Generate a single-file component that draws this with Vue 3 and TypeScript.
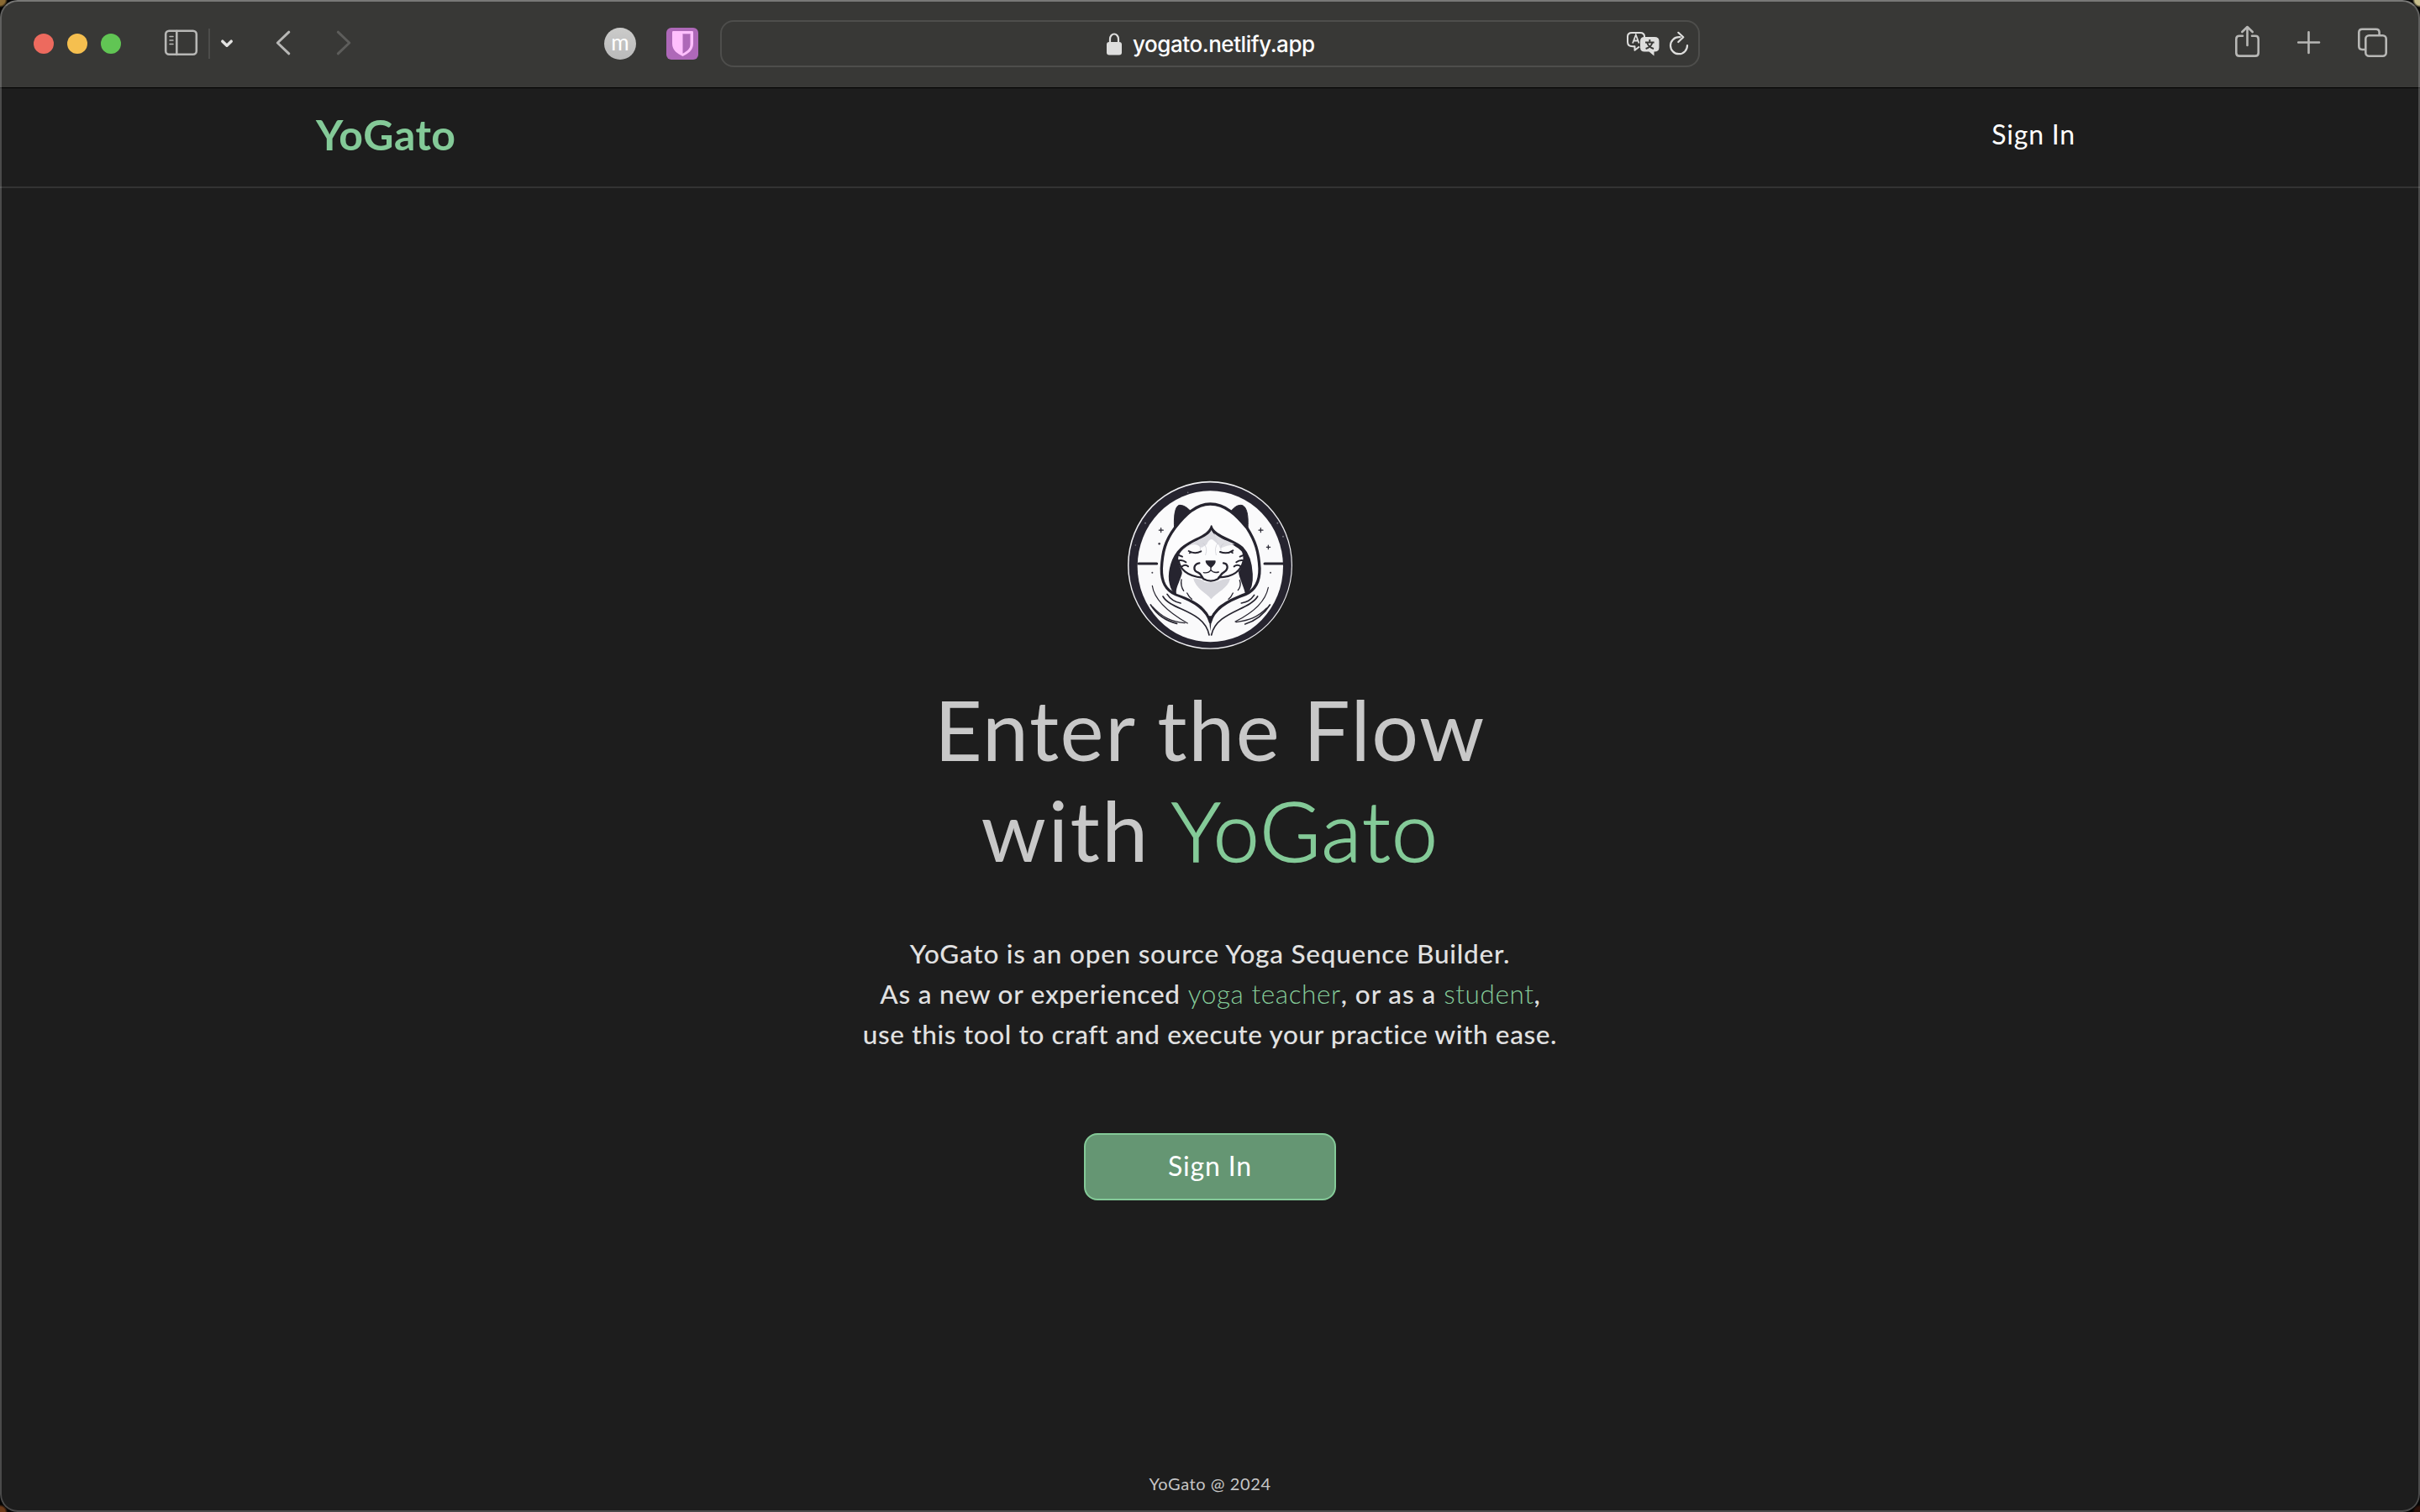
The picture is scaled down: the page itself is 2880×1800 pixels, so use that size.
<script setup lang="ts">
const lights = ['#ed6a5e', '#f5bf4f', '#61c554']
</script>

<template>
  <div class="desktop">
    <div class="window">
      <div class="toolbar">
        <div class="lights">
          <i v-for="c in lights" :key="c" :style="{ background: c }" />
        </div>
        <svg class="ic sidebar" viewBox="194 0 44 104" width="44" height="104">
          <rect x="197.200" y="36.800" width="36.600" height="28" rx="4" />
          <path d="M210.300 37v28" />
          <path class="thin" d="M202 43.400h4M202 48h4M202 52.400h4" />
        </svg>
        <span class="sep" />
        <svg class="ic chev" viewBox="260 0 20 104" width="20" height="104"><path d="M264.800 49.200l5.200 5 5.200-5" /></svg>
        <svg class="ic back" viewBox="325 0 24 104" width="24" height="104"><path d="M343.800 38.200L330.300 51l13.500 12.800" /></svg>
        <svg class="ic fwd" viewBox="397 0 24 104" width="24" height="104"><path d="M402.300 38.200L415.800 51l-13.500 12.800" /></svg>
        <span class="avatar">m</span>
        <svg class="shield" viewBox="0 0 38 38" width="38" height="38">
          <rect width="38" height="38" rx="6" fill="#ae68b8" />
          <path d="M7 5.200Q7 4 8.200 4H30.800Q32 4 32 5.200V19C32 27 25.500 31 19.500 34C13.500 31 7 27 7 19Z" fill="#ffbffd" />
          <path d="M19.500 7.500H28.500V20C28.500 25 24.500 28 19.500 30.700Z" fill="#ae68b8" />
          <path d="M19.500 7.500H28.500" stroke="#c883d0" stroke-width="1" fill="none" />
        </svg>
        <div class="url">
          <svg class="lock" viewBox="0 0 20 28" width="20" height="28">
            <path d="M5 13V7.500a5 6 0 0 1 10 0V13" fill="none" stroke="#dededd" stroke-width="2.200" />
            <rect x="1" y="11" width="18" height="15.500" rx="3" fill="#dededd" />
          </svg>
          <span>yogato.netlify.app</span>
          <div class="tools">
            <svg viewBox="1934 36 42 34" width="42" height="34">
              <path d="M1951 56.500l-5.500 4.300v-4.600h-2.500q-6 0-6-5.200v-6.500q0-4.500 5-4.500h10q5 0 5 4.500v1" fill="none" stroke="#dededd" stroke-width="2" stroke-linejoin="round" />
              <path d="M1943 52.500l3.800-10 3.800 10M1944.300 49.500h5" fill="none" stroke="#dededd" stroke-width="1.800" />
              <path d="M1957 45h12q5.500 0 5.500 5v7.500q0 5-5.500 5h-.5v5l-6-5h-5.500q-5 0-5-5V50q0-5 5-5z" fill="#dededd" />
              <path d="M1963.300 48v3.200M1958 51.500h10.600M1960.200 52c1.200 3.500 3.800 5.800 7.800 7M1966.400 52c-1.200 3.500-3.800 5.800-7.800 7" fill="none" stroke="#383836" stroke-width="1.900" />
            </svg>
            <svg viewBox="1984 36 28 34" width="28" height="34">
              <path d="M1999.500 45.200h-1.500a10 10 0 1 0 10 9.800" fill="none" stroke="#dededd" stroke-width="2.200" stroke-linecap="round" />
              <path d="M1997.300 39.800l6 5.500-6 5.700" fill="none" stroke="#dededd" stroke-width="2.200" stroke-linecap="round" stroke-linejoin="round" />
            </svg>
          </div>
        </div>
        <div class="right">
          <svg class="ic" viewBox="2656 0 38 104" width="38" height="104">
            <path d="M2669 42.700h-4q-3.700 0-3.700 3.700v16.500q0 3.700 3.700 3.700h19q3.700 0 3.700-3.700V46.400q0-3.700-3.700-3.700h-4" />
            <path d="M2674.500 54V32.500M2668.300 38l6.200-6 6.200 6" />
          </svg>
          <svg class="ic" viewBox="2730 0 36 104" width="36" height="104"><path d="M2747.500 38.200v24.800M2735.200 50.500h24.800" /></svg>
          <svg class="ic" viewBox="2802 0 44 104" width="44" height="104">
            <rect x="2815.300" y="42.300" width="24.400" height="24.400" rx="4" />
            <path d="M2814.500 59h-3.300q-3.900 0-3.900-3.900V38.600q0-3.900 3.900-3.900h16.500q3.900 0 3.900 3.900V41" />
          </svg>
        </div>
      </div>

      <header class="nav">
        <span class="brand">YoGato</span>
        <a class="signin">Sign In</a>
      </header>

      <main class="hero">
        <svg class="logo" viewBox="0 0 660 675" width="220" height="225">
          <ellipse cx="330" cy="338.500" rx="294" ry="300" fill="#f0f0f3" />
          <ellipse cx="330.500" cy="339" rx="290" ry="295.500" fill="#26242f" />
          <ellipse cx="331" cy="343" rx="260" ry="270" fill="#fafafb" />
          <g fill="none" stroke="#26242f" stroke-linecap="round" stroke-linejoin="round">
            <path d="M75 333H140M525 333H592" stroke-width="9" />
            <path d="M203 208C200 165 205 125 222 124C242 124 258 142 272 158C250 170 222 190 203 208Z" fill="#26242f" stroke-width="3" />
            <path d="M465 208C468 165 463 125 440 124C420 124 408 142 394 160C420 172 445 190 465 208Z" fill="#26242f" stroke-width="3" />
            <path d="M331 120C280 120 240 160 205 205C170 252 160 290 157 350C156 400 172 428 208 443C262 462 318 490 331 542C344 490 400 462 456 443C490 428 508 400 507 350C504 290 492 252 462 205C425 160 385 120 331 120Z" fill="#fcfcfd" stroke-width="10" />
            <path d="M335 198C325 240 250 245 215 290C188 325 180 375 188 405C192 425 200 435 210 442L331 500L460 438C477 425 482 405 480 370C478 330 470 300 446 275C415 245 343 235 335 198Z" fill="#26242f" stroke-width="5" />
          </g>
          <path d="M335 214C325 245 265 250 228 288C216 302 215 315 218 330C222 350 236 360 228 375C220 400 206 425 210 440C265 458 320 486 331 530C342 486 400 458 455 437C450 412 434 385 432 362C450 340 452 310 444 290C415 258 345 245 335 214Z" fill="#fcfcfd" />
          <path d="M335 214C325 240 262 252 229 288L250 272Q275 255 300 276L318 265Q331 235 345 252L368 272Q395 255 418 264C390 248 345 242 335 214Z" fill="#d9d9df" />
          <path d="M345 225Q370 246 418 264Q390 268 366 278Z" fill="#dedee3" />
          <path d="M270 385Q298 388 312 398Q333 402 358 396Q380 386 402 387C395 420 355 435 334 460C315 435 280 425 270 385Z" fill="#d6d6dc" />
          <path d="M293 368Q299 372 307 388Q333 402 358 388Q367 372 372 366L361 363L333 356L307 365Z" fill="#fcfcfd" />
          <g fill="none" stroke="#26242f" stroke-linecap="round" stroke-linejoin="round">
            <path d="M254 288Q276 301 298 289M366 291Q391 301 412 286" stroke-width="6" />
            <path d="M262 293l-5 2M406 292l5 3" stroke-width="5" />
            <path d="M295 285Q298 265 285 262M369 285Q366 266 378 262M306 260Q324 275 314 302M358 260Q344 275 352 302" stroke-width="2" stroke="#c9c9d0" />
            <path d="M316 324H348Q350 332 334 346Q316 333 316 324Z" fill="#26242f" stroke-width="4" />
            <path d="M333 344V356Q325 368 307 365M333 356Q343 368 361 363" stroke-width="4" />
            <path d="M292 331C270 335 268 358 288 365C298 369 298 377 307 388Q333 402 358 388C367 378 370 368 382 362C398 350 393 332 378 331" stroke-width="7" />
            <path d="M218 323C222 350 246 378 302 383M450 323C440 360 415 380 362 382" stroke-width="7" />
            <path d="M219 303l12 5M218 322Q232 318 244 328M230 343Q242 334 252 343M449 303l-12 5M450 322Q436 318 424 328M440 343Q428 334 416 343" stroke-width="6" />
            <path d="M228 390Q224 412 236 430M436 392Q443 412 430 428M248 438Q255 452 265 460M412 438Q406 452 396 460" stroke-width="4" />
            <path d="M124 412C130 455 170 500 250 546M538 418C530 460 500 500 420 540" stroke-width="3.500" />
            <path d="M162 450C190 500 310 500 327 588M500 450C470 500 352 505 335 588" stroke-width="5" />
            <path d="M118 480C140 515 175 538 212 547M544 480C522 515 490 538 455 549" stroke-width="5" />
            <path d="M125 487C160 525 190 540 240 545M532 492C500 525 470 535 423 542" stroke-width="4" />
            <path d="M177 442C190 462 205 470 225 474M488 445C475 465 460 470 442 474" stroke-width="5" />
          </g>
          <path d="M326 520L331 574L337 520Z" fill="#26242f" />
          <g stroke="#26242f" stroke-width="3.500" stroke-linecap="round">
            <path d="M155 206v15M148 213.500h15M511 206v15M504 213.500h15M538 267v14M532 274h13" />
          </g>
          <g fill="#44424c"><circle cx="149" cy="262" r="4" /><circle cx="124" cy="365" r="3" /><circle cx="546" cy="365" r="3" /></g>
          <g fill="#777681"><circle cx="99" cy="188" r="3" /><circle cx="571" cy="188" r="3" /><circle cx="591" cy="236" r="3" /><circle cx="64" cy="267" r="2.500" /><circle cx="251" cy="79" r="2.500" /></g>
        </svg>
        <h1>
          <span class="t1">Enter the Flow</span><br>
          <span class="t2">with</span> <span class="t3">YoGato</span>
        </h1>
        <p class="lead">
          <span class="p1">YoGato is an open source Yoga Sequence Builder.</span><br>
          <span class="p2">As a new or experienced</span> <span class="g1">yoga teacher</span><span class="p3">, or as a </span><span class="g2">student</span>,<br>
          <span class="p4">use this tool to craft and execute your practice with ease.</span>
        </p>
        <button class="cta">Sign In</button>
      </main>

      <footer class="foot">YoGato @ 2024</footer>
    </div>
  </div>
</template>

<style>
body { margin: 0; background: #000; }
</style>

<style scoped>
.desktop {
  width: 2880px;
  height: 1800px;
  overflow: hidden;
  background:
    radial-gradient(circle at 0 0, #8a6a33 0 6px, transparent 9px),
    radial-gradient(circle at 100% 0, #c9c08e 0 6px, transparent 9px),
    radial-gradient(circle at 0 100%, #6b3a19 0 6px, transparent 9px),
    radial-gradient(circle at 100% 100%, #2c1008 0 6px, transparent 9px),
    #050505;
}
.window {
  position: relative;
  box-sizing: border-box;
  height: 1800px;
  border-radius: 21px;
  overflow: hidden;
  background: #1d1d1d;
  display: flex;
  flex-direction: column;
  font-family: Lato, "Noto Sans", sans-serif;
}
.window::after {
  content: "";
  position: absolute;
  inset: 0;
  border-radius: 21px;
  border: 2px solid rgba(255, 255, 255, 0.2);
  border-top-color: rgba(255, 255, 255, 0.32);
  pointer-events: none;
}
.toolbar {
  box-sizing: border-box;
  height: 105px;
  flex: none;
  border-bottom: 1px solid #000;
  background: #383836;
  display: flex;
  align-items: center;
  padding-left: 40px;
}
.toolbar > * { flex: none; }
.lights { display: flex; gap: 16px; }
.lights i { width: 24px; height: 24px; border-radius: 50%; }
.ic { fill: none; stroke: #b7b7b5; stroke-width: 2.600; stroke-linecap: round; stroke-linejoin: round; }
.thin { stroke-width: 1.500; }
.sidebar { margin-left: 50px; }
.sep { width: 2px; height: 36px; margin-left: 10px; background: #4d4d4b; }
.chev { margin-left: 10px; stroke: #e2e2e1; stroke-width: 3.500; }
.back { margin-left: 45px; stroke-width: 3; }
.fwd { margin-left: 48px; stroke: #5d5d5b; stroke-width: 3; }
.avatar {
  width: 38px;
  height: 38px;
  margin-left: 298px;
  border-radius: 50%;
  background: linear-gradient(#cbcbca, #bababa);
  color: #fff;
  font-size: 26px;
  line-height: 35px;
  text-align: center;
}
.shield { margin-left: 36px; }
.url {
  position: relative;
  box-sizing: border-box;
  width: 1166px;
  height: 56px;
  margin-left: 26px;
  border: 2px solid #4e4e4c;
  border-radius: 16px;
  display: flex;
  align-items: center;
  padding-left: 457px;
  gap: 12px;
  color: #fff;
  font: 500 26px/30px Inter, sans-serif;
  letter-spacing: -0.440px;
}
.url span { margin-top: 1px; }
.lock { margin-top: 1px; }
.tools { position: absolute; right: 9px; top: 9px; display: flex; gap: 8px; }
.right { margin-left: auto; margin-right: 34px; display: flex; gap: 36px; }
.nav {
  box-sizing: border-box;
  height: 119px;
  flex: none;
  border-bottom: 2px solid #333;
  display: flex;
  justify-content: space-between;
  align-items: center;
  padding: 0 410px 7px 376px;
}
.brand { color: #84ca98; font-size: 50px; line-height: 60px; font-weight: 700; letter-spacing: 0.500px; }
.signin { color: #fff; font-size: 32px; line-height: 38px; font-weight: 400; letter-spacing: 0.800px; }
.hero {
  flex: 1;
  display: flex;
  flex-direction: column;
  align-items: center;
  padding-top: 336px;
}
.logo { flex: none; }
h1 {
  margin: 23px 0 0;
  color: #c8c8c8;
  font-size: 98.500px;
  line-height: 120px;
  font-weight: 400;
  text-align: center;
}
.t1 { letter-spacing: 1.570px; }
.t2 { letter-spacing: 2.500px; }
.t3 { color: #84ca98; font-weight: 300; letter-spacing: 1.400px; -webkit-text-stroke: 1.500px #84ca98; }
.lead {
  margin: 63px 0 0;
  color: #e1e1e1;
  font-size: 31.500px;
  line-height: 48px;
  font-weight: 500;
  text-align: center;
}
.p1 { letter-spacing: 0.760px; }
.p2 { letter-spacing: 0.800px; }
.p3 { letter-spacing: 0.950px; }
.p4 { letter-spacing: 0.630px; }
.g1, .g2 { color: #84ca98; font-weight: 300; }
.g1 { margin-left: 1px; letter-spacing: 0.570px; }
.g2 { letter-spacing: 0.600px; }
.cta {
  box-sizing: border-box;
  width: 300px;
  height: 80px;
  margin-top: 94px;
  padding: 0 0 2px;
  border: 2px solid #84ca98;
  border-radius: 16px;
  background: #659673;
  color: #fff;
  font: 400 32px/38px Lato, sans-serif;
  letter-spacing: 0.850px;
}
.foot {
  flex: none;
  margin-bottom: 22px;
  text-align: center;
  color: #c6c6c6;
  font-size: 20px;
  line-height: 24px;
  letter-spacing: 0.580px;
}
</style>
